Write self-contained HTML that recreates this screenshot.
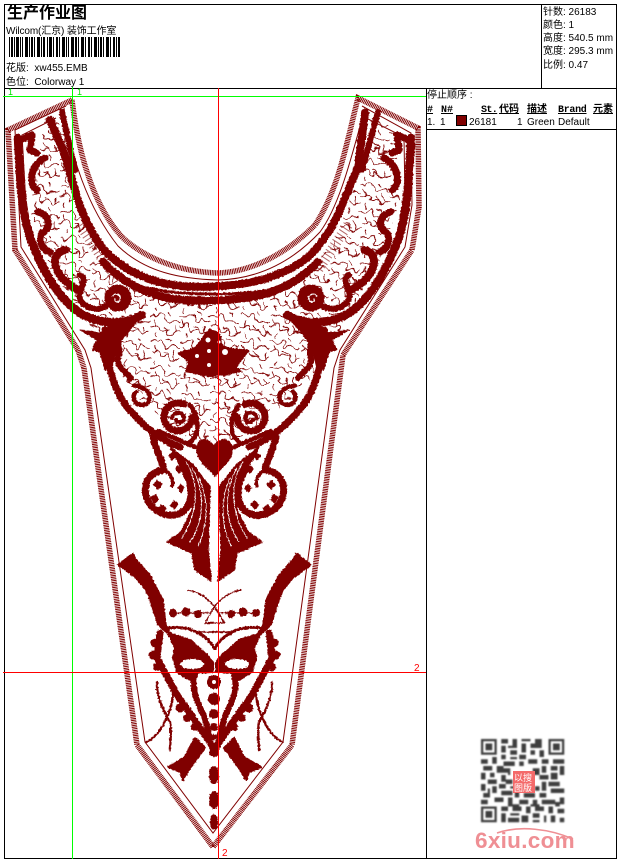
<!DOCTYPE html>
<html><head><meta charset="utf-8"><style>
html,body{margin:0;padding:0;background:#fff;width:620px;height:860px;overflow:hidden}
svg{display:block}
text{font-family:"Liberation Sans","WenQuanYi Zen Hei","Noto Sans CJK SC",sans-serif;font-size:10px;fill:#000}
.h{font-family:"Liberation Mono","WenQuanYi Zen Hei","Noto Sans CJK SC",monospace;font-weight:bold;text-decoration:underline}
</style></head><body>
<svg width="620" height="860" viewBox="0 0 620 860" xmlns="http://www.w3.org/2000/svg">
<defs>
<filter id="jag" filterUnits="userSpaceOnUse" x="0" y="0" width="620" height="860"><feTurbulence type="fractalNoise" baseFrequency="0.55" numOctaves="1" seed="4"/><feDisplacementMap in="SourceGraphic" scale="3" xChannelSelector="R" yChannelSelector="G"/></filter>
<filter id="wob" filterUnits="userSpaceOnUse" x="0" y="0" width="620" height="860"><feTurbulence type="fractalNoise" baseFrequency="0.1" numOctaves="2" seed="9"/><feDisplacementMap in="SourceGraphic" scale="9" xChannelSelector="R" yChannelSelector="G"/></filter>
<filter id="bl" x="-5%" y="-5%" width="110%" height="110%"><feGaussianBlur stdDeviation="0.35"/></filter>
<pattern id="sq" width="30" height="26" patternUnits="userSpaceOnUse"><path d="M0 4c3-3 5 2 8 0s4-3 6 0s-1 5 2 6s5-3 8-2s3 4 6 2M0 14c3 2 5-3 8-1s0 5 3 6s5-3 7-1s1 5 4 5s5-4 8-3M4 8c-1 2 2 3 1 6M14 14c2 2 4 1 5 4M24 14c-1 3 2 4 1 7M6 21c-2 2 0 3 0 5M18 0c1 2 3 2 3 4" fill="none" stroke="#800000" stroke-width=".9"/></pattern>
<g id="half" fill="none" stroke="#800000" stroke-linecap="round" stroke-linejoin="round">
  <path d="M18 138C20 180 22 220 33 245C45 275 60 300 80 313C100 325 125 325 142 315" stroke-width="8.5"/>
  <path d="M105 330C106 365 115 392 128 408C145 428 160 440 180 447" stroke-width="7"/>
  <path d="M20 140L32 135L30 150L37 153M45 158C30 165 28 185 37 190M38 212C50 215 52 228 42 233C38 240 42 250 50 252" stroke-width="7"/>
  <path d="M65 250C50 252 50 275 78 290" stroke-width="8"/>
  <path d="M80 275C92 280 70 295 85 305C95 312 105 308 110 303" stroke-width="6"/>
  <path d="M124 322C112 335 122 345 118 358C116 366 126 372 131 378" stroke-width="6"/>
  <path d="M134 386C148 386 154 398 146 404C136 408 130 398 136 392" stroke-width="4.5"/>
  <circle cx="118" cy="298" r="12" fill="#800000" stroke-width="3"/>
  <path d="M112 296c4-4 10-1 8 4c-2 3-6 2-5-1" stroke="#fff" stroke-width="1.2"/>
  <path d="M80 330L100 333L110 325L125 320L140 318L130 330L118 345L112 368L105 370L100 352L92 350L97 340Z" fill="#800000" stroke-width="1"/>
  <circle cx="178" cy="417" r="14" stroke-width="7" stroke-dasharray="72 16"/>
  <path d="M172 418c2-7 11-7 12 0c0 5-6 6-8 2" stroke-width="4"/>
  <path d="M158 431L195 447M190 405C200 418 200 435 190 442" stroke-width="4.5"/>
  <path d="M153 437C156 450 162 460 164 470C150 472 143 482 146 496C150 512 172 522 185 510C194 500 192 482 184 470" stroke-width="7"/>
  <path d="M164 470C172 474 174 482 172 486" stroke-width="3.5"/>
  <g fill="#800000" stroke="none"><path d="M157 480l6 4-5 6-5-5zM150 497l6-3 3 6-5 4zM161 504l6 4-4 6-6-4zM174 500l5 4-5 6-4-5zM181 484l4 4-4 5-4-5zM178 465l5 4-4 5-4-5zM172 452l4 4-4 5-4-5z"/></g>
  <path d="M170 447L193 465L210 487L208 550L211 581L195 570L192 553L167 542L181 532L192 510L193 490Z" fill="#800000" stroke-width="1.5"/>
  <path d="M186 462C198 480 200 510 182 538M192 468C205 490 205 520 190 542M199 478C209 500 208 525 198 546" stroke="#fff" stroke-width=".9"/>
  <path d="M118 565L133 553L135 558L150 575L163 600L166 625L175 640L158 625L150 600L146 590L135 577Z" fill="#800000" stroke-width="1.5"/>
  <path d="M188 590C200 592 210 600 217 610" stroke-width="1.6"/>
  <path d="M214 607L205 623" stroke-width="1.2"/>
  <path d="M176 613H211" stroke-width="1.2"/>
  <circle cx="173" cy="613" r="3.5" fill="#800000" stroke-width="1"/><circle cx="186" cy="612" r="4" fill="#800000" stroke-width="1"/><circle cx="198" cy="614" r="3.5" fill="#800000" stroke-width="1"/>
  <path d="M168 628C185 625 205 632 214 648" stroke-width="3" stroke-dasharray="3 1"/>
  <path d="M168 633L190 640L207 655L213 663L213 672L193 673L190 680L177 672L173 658L175 648Z" fill="#800000" stroke-width="2"/>
  <ellipse cx="192" cy="664" rx="12" ry="5" fill="#fff" stroke="none"/>
  <path d="M160 633L157 658L177 695L210 742L215 752" stroke-width="7" stroke-dasharray="1.5 1.5"/>
  <g fill="#800000" stroke="none"><circle cx="155" cy="643" r="4.5"/><circle cx="153" cy="655" r="4.5"/><circle cx="157" cy="667" r="4"/><circle cx="180" cy="708" r="4.5"/><circle cx="187" cy="718" r="4"/><circle cx="195" cy="727" r="4"/></g>
  <path d="M196 672C190 685 196 700 204 716L210 738" stroke-width="6"/>
  <path d="M157 682C156 697 164 712 170 722C172 732 170 742 170 750M173 688C174 702 168 718 160 730C156 736 152 739 147 742" stroke-width="2.4"/>
  <path d="M195 738L205 748L190 768L183 780L180 772L168 767L185 757Z" fill="#800000" stroke-width="2"/>
</g>
</defs>

<rect width="620" height="860" fill="#fff"/>

<!-- squiggle lace -->
<clipPath id="lc"><path d="M45 118L62 115L75 185L100 250L135 290L215 303L295 290L335 240L357 180L372 115L395 130L400 200L380 260L345 320L320 370L290 400L240 440L215 470L190 440L140 400L110 360L80 310L50 270L30 210Z"/></clipPath>
<g clip-path="url(#lc)"><rect x="0" y="90" width="430" height="400" fill="url(#sq)" filter="url(#wob)"/></g>

<!-- thin outlines & hatch bands -->
<g fill="none" stroke="#800000">
  <path d="M72 100L8 130L15 250L78 350L84 368L137 745L213 847L292 745L343 355L412 250L419 207L418 128L358 98C345 150 338 190 315 225C285 255 250 272 218 273C185 272 150 262 123 238C92 205 78 150 72 100" stroke-width="5.5" stroke-dasharray="1 .7"/>
  <path d="M66 106L15 130L21 247L85 350L91 368L145 742L213 833L283 742L334 368L340 350L405 247L412 205L411 133L362 106" stroke-width="1"/>
  <path d="M56 118L22 135L28 240" stroke-width="1"/>
  <path d="M366 118L404 137L405 200" stroke-width="1"/>
  <path d="M64 108C70 155 88 208 118 246C145 272 180 279 218 280C255 279 290 264 320 232C340 205 352 155 365 108" stroke-width="1"/>
  <g filter="url(#jag)" stroke-linecap="round">
    <path d="M50 120L63 150L72 180L80 207C88 225 95 240 107 253C125 270 147 282 180 286C200 288 235 287 265 279C285 272 302 265 315 250C328 235 335 222 342 205L358 167L365 113" stroke-width="8"/>
    <path d="M103 262C120 280 145 295 175 299C200 302 240 301 265 294C285 288 300 280 318 262" stroke-width="8"/>
    <path d="M62 112L75 170M378 112L362 170" stroke-width="6"/>
    <path d="M130 283C160 293 190 294 218 294C250 294 280 290 300 281" stroke-width="3" stroke-dasharray="5 2"/>
  </g>
  <path d="M80 225L110 270M348 225L318 270" stroke-width="10" stroke-dasharray="1 3" opacity=".6"/>
</g>

<!-- motifs -->
<g filter="url(#jag)">
  <use href="#half"/>
  <use href="#half" transform="matrix(-1 0 0 1 429 0)"/>
  <path d="M177 353L195 347L210 328L225 347L250 350L237 367L243 372L210 377L185 372L188 362Z" fill="#800000"/>
  <g fill="#800000"><circle cx="212" cy="340" r="10"/><circle cx="197" cy="358" r="10"/><circle cx="230" cy="358" r="10"/><circle cx="203" cy="369" r="7"/><circle cx="224" cy="369" r="7"/><circle cx="213" cy="356" r="11"/></g>
  <path d="M214 445C208 436 196 437 196 450C197 462 208 468 215 477C222 468 232 462 233 450C233 437 220 436 214 445Z" fill="#800000"/>
  <g fill="#800000">
    <circle cx="214" cy="682" r="7"/><circle cx="214" cy="699" r="6"/><circle cx="214" cy="714" r="5"/><circle cx="214" cy="727" r="4"/><circle cx="214" cy="737" r="3"/><circle cx="214" cy="752" r="5"/>
    <ellipse cx="214" cy="775" rx="5" ry="9"/><ellipse cx="214" cy="800" rx="5" ry="9"/><ellipse cx="214" cy="822" rx="4" ry="8"/>
  </g>
  <path d="M205 623L225 623M214 607L225 623M197 632L232 632" fill="none" stroke="#800000" stroke-width="1.4"/>
</g>
<g fill="#fff"><circle cx="208" cy="340" r="2.5"/><circle cx="225" cy="352" r="3"/><circle cx="209" cy="351" r="2"/><circle cx="197" cy="356" r="2"/><circle cx="214" cy="682" r="2"/><circle cx="209" cy="365" r="2"/><circle cx="219" cy="342" r="1.5"/></g>

<!-- frame -->
<g fill="none" stroke="#000" stroke-width="1" shape-rendering="crispEdges">
  <rect x="4.5" y="4.5" width="612" height="854"/>
  <path d="M4 88.5H617M426.5 88V859M541.5 4V88M426 129.5H617"/>
</g>

<!-- guides -->
<g shape-rendering="crispEdges" stroke-width="1" fill="none">
  <path d="M3 96.5H426M72.5 87V859" stroke="#00ff00"/>
  <path d="M218.5 88V859M3 672.5H426" stroke="#ff0000"/>
</g>
<text x="8" y="95" style="fill:#00e000;font-size:9px">1</text>
<text x="77" y="95" style="fill:#00e000;font-size:9px">1</text>
<text x="414" y="671" style="fill:#f00">2</text>
<text x="222" y="856" style="fill:#f00">2</text>

<!-- header -->
<text x="7" y="18" style="font-size:16px;font-weight:bold">生产作业图</text>
<text x="6" y="34" style="font-size:10px;letter-spacing:-.12px">Wilcom(汇京) 装饰工作室</text>
<path fill="#000" shape-rendering="crispEdges" d="M9 37h1v20H9zM11 37h2v20h-2zM14 37h1v20h-1zM16 37h3v20h-3zM20 37h1v20h-1zM22 37h1v20h-1zM25 37h3v20h-3zM29 37h1v20h-1zM31 37h2v20h-2zM34 37h1v20h-1zM37 37h3v20h-3zM41 37h1v20h-1zM43 37h2v20h-2zM47 37h1v20h-1zM49 37h3v20h-3zM53 37h1v20h-1zM56 37h2v20h-2zM59 37h1v20h-1zM62 37h3v20h-3zM66 37h1v20h-1zM68 37h1v20h-1zM71 37h3v20h-3zM75 37h2v20h-2zM78 37h1v20h-1zM81 37h3v20h-3zM85 37h1v20h-1zM88 37h2v20h-2zM91 37h1v20h-1zM94 37h3v20h-3zM98 37h1v20h-1zM100 37h2v20h-2zM103 37h1v20h-1zM106 37h3v20h-3zM110 37h1v20h-1zM113 37h2v20h-2zM116 37h1v20h-1zM118 37h2v20h-2z"/>
<text x="6" y="71">花版:&#160; xw455.EMB</text>
<text x="6" y="85">色位:&#160; Colorway 1</text>

<!-- stats -->
<text x="543" y="15">针数: 26183</text>
<text x="543" y="28">颜色: 1</text>
<text x="543" y="41">高度: 540.5 mm</text>
<text x="543" y="54">宽度: 295.3 mm</text>
<text x="543" y="68">比例: 0.47</text>

<!-- table -->
<text x="427" y="98">停止顺序 :</text>
<text class="h" x="427" y="112">#</text>
<text class="h" x="441" y="112">N#</text>
<text class="h" x="481" y="112" style="letter-spacing:-.6px">St.</text>
<text class="h" x="499" y="112">代码</text>
<text class="h" x="527" y="112">描述</text>
<text class="h" x="558" y="112" style="letter-spacing:-.3px">Brand</text>
<text class="h" x="593" y="112">元素</text>
<text x="427" y="125">1.</text>
<text x="440" y="125">1</text>
<rect x="456.5" y="115.5" width="10" height="10" fill="#800000" stroke="#000" shape-rendering="crispEdges"/>
<text x="469" y="125">26181</text>
<text x="517" y="125">1</text>
<text x="527" y="125">Green</text>
<text x="558" y="125">Default</text>

<!-- QR -->
<g transform="translate(481 739) scale(2.25)" fill="#3c3c3c" filter="url(#bl)">
  <path d="M0 0h7v7H0zM1 1v5h5V1zM2 2h3v3H2zM30 0h7v7h-7zM31 1v5h5V1zM32 2h3v3h-3zM0 30h7v7H0zM1 31v5h5v-5zM2 32h3v3H2z" fill-rule="evenodd"/>
  <path d="M9 0h3v2H9zM14 0h2v3h-2zM18 0h4v1h-4zM24 0h3v2h-3zM9 3h2v3H9zM12 3h4v1h-4zM18 2h2v4h-2zM22 2h5v2h-5zM13 5h3v2h-3zM22 5h2v2h-2zM26 5h2v3h-2zM9 7h2v2H9zM17 7h3v2h-3zM0 9h3v2H0zM5 8h2v3H5zM10 10h5v2h-5zM17 10h2v2h-2zM21 9h4v2h-4zM27 9h3v2h-3zM32 9h5v2h-5zM1 12h4v2H1zM7 12h3v3H7zM12 13h1v3h-1zM27 12h2v3h-2zM31 12h3v2h-3zM35 12h2v4h-2zM0 15h2v3H0zM4 15h2v2H4zM9 16h2v3H9zM26 16h4v2h-4zM31 15h3v3h-3zM3 18h4v2H3zM8 20h3v2H8zM27 19h2v4h-2zM30 19h5v2h-5zM0 20h2v3H0zM5 21h2v3H5zM31 22h6v2h-6zM1 24h3v2H1zM9 23h5v2H9zM15 23h2v3h-2zM19 24h5v2h-5zM26 24h3v2h-3zM6 26h4v2H6zM12 26h2v3h-2zM17 27h4v2h-4zM23 27h2v2h-2zM27 27h6v2h-6zM35 26h2v3h-2zM0 27h3v2H0zM9 30h3v2H9zM14 30h4v2h-4zM20 30h2v3h-2zM24 30h4v2h-4zM30 30h2v3h-2zM34 31h3v2h-3zM9 33h2v4H9zM13 33h4v1h-4zM18 34h3v3h-3zM23 33h3v2h-3zM28 34h1v3h-1zM31 34h2v3h-2zM12 35h4v2h-4zM23 36h3v1h-3zM35 35h2v2h-2zM13 8h3v1h-3zM10 13h2v2h-2zM3 22h1v2H3zM11 18h3v2h-3zM13 21h3v1h-3zM24 21h2v2h-2zM23 13h3v3h-3zM12 29h5v1h-5zM22 29h4v1h-4zM16 35h1v2h-1zM33 28h2v2h-2z"/>
</g>
<rect x="513" y="771" width="22" height="22" fill="#f46a6a"/>
<text x="514" y="781" style="fill:#fff;font-size:9px">以搜</text>
<text x="514" y="791" style="fill:#fff;font-size:9px">图版</text>
<text x="475" y="848" style="font-size:22.5px;font-weight:bold;fill:#ef8f94;letter-spacing:.3px">6xiu.com</text>
<path d="M497 833C520 825 550 829 573 839" fill="none" stroke="#ef8f94" stroke-width="1.6"/>
</svg>
</body></html>
